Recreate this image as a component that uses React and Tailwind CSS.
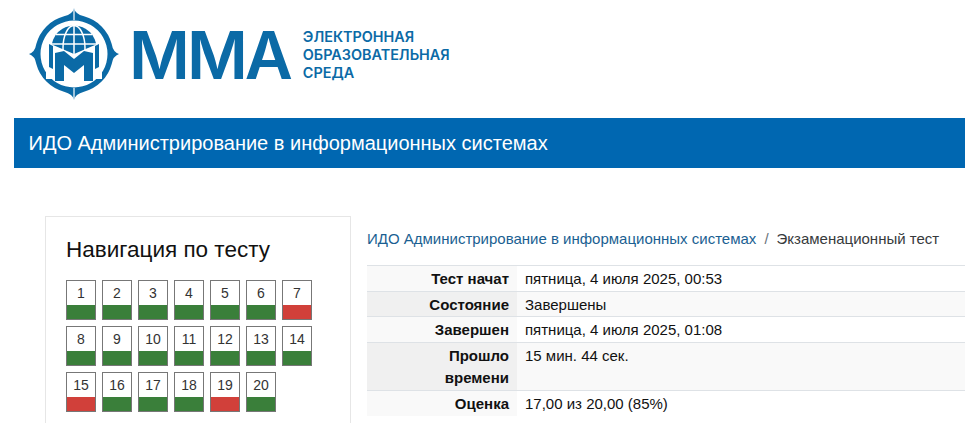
const BLUE = "#0b6aa6";

const Logo = () => (
  <svg width="92" height="94" viewBox="0 0 92 94" className="shrink-0">
    {/* ring with four flared points */}
    <path
      fill={BLUE}
      fillRule="evenodd"
      d="M46 1 Q47 7 56 9.3 A39 39 0 0 1 83.7 37 Q85 45 91 47 Q85 49 83.7 57 A39 39 0 0 1 56 84.7 Q47 87 46 93 Q45 87 36 84.7 A39 39 0 0 1 8.3 57 Q7 49 1 47 Q7 45 8.3 37 A39 39 0 0 1 36 9.3 Q45 7 46 1 Z M46 13.5 A33.5 33.5 0 1 0 46.01 13.5 Z"
    />
    <path d="M46 0 V13 M46 81 V94" stroke="#fff" strokeWidth="1.2" />
    {/* globe */}
    <circle cx="46" cy="41" r="22.5" fill={BLUE} />
    <g stroke="#fff" strokeWidth="1.5" fill="none">
      <ellipse cx="46" cy="41" rx="11" ry="22.5" />
      <path d="M46 18 V50 M28 27.5 H64 M23 37 H69" />
    </g>
    {/* open book */}
    <path d="M18 35 L46 47 L74 35 V72 H18 Z" fill="#fff" />
    <path d="M21 37 L25 39 V62 L21 60 Z M71 37 L67 39 V62 L71 60 Z" fill={BLUE} />
    <path
      fill={BLUE}
      d="M27 46 L36 44 L46 52 L56 44 L65 46 V74 H56 V58 L46 66 L36 58 V74 H27 Z"
    />
  </svg>
);

const NAV_ITEMS = [
  1, 2, 3, 4, 5, 6, 7, 8, 9, 10, 11, 12, 13, 14, 15, 16, 17, 18, 19, 20,
];
const WRONG = [7, 15, 19];

const ROWS = [
  { label: "Тест начат", value: "пятница, 4 июля 2025, 00:53", head: "bg-[#f9f9f9]", cell: "bg-white", h: "h-[26px]" },
  { label: "Состояние", value: "Завершены", head: "bg-[#f0f0f0]", cell: "bg-[#f9f9f9]", h: "h-[25px]" },
  { label: "Завершен", value: "пятница, 4 июля 2025, 01:08", head: "bg-[#f9f9f9]", cell: "bg-white", h: "h-[26px]" },
  { label: "Прошло времени", value: "15 мин. 44 сек.", head: "bg-[#f0f0f0]", cell: "bg-[#f9f9f9]", h: "h-[48px]" },
  { label: "Оценка", value: "17,00 из 20,00 (85%)", head: "bg-[#f9f9f9]", cell: "bg-white", h: "h-[25px]" },
];

export default function App() {
  return (
    <div className="h-[423px] overflow-hidden bg-white font-['Liberation_Sans',sans-serif] text-[#1d2125]">
      <header className="flex h-[118px] items-start pl-[28px] pt-[7px]">
        <Logo />
        <div className="ml-[9px] mt-[13px] font-['Inter',sans-serif] text-[66px] font-semibold leading-[70px] tracking-[-3px] text-[#0b6aa6]">
          MMA
        </div>
        <div className="ml-[13px] mt-[21px] font-['Inter',sans-serif] text-[14.4px] font-semibold leading-[18px] text-[#0b6aa6]">
          <div>ЭЛЕКТРОННАЯ</div>
          <div>ОБРАЗОВАТЕЛЬНАЯ</div>
          <div>СРЕДА</div>
        </div>
      </header>

      <div className="ml-[14px] flex h-[50px] items-center bg-[#0067b1] pl-[14.5px] text-[20px] text-white">
        ИДО Администрирование в информационных системах
      </div>

      <main className="mt-[48px] flex items-start pl-[45px]">
        <aside className="h-[300px] w-[306px] shrink-0 border border-[#e6e6e6] px-[20px] pt-[19px]">
          <h2 className="text-[22.5px] leading-[28px] text-[#111]">Навигация по тесту</h2>
          <div className="mt-[16px] grid w-[246px] grid-cols-[repeat(7,30px)] gap-x-[6px] gap-y-[6px]">
            {NAV_ITEMS.map((n) => (
              <div key={n} className="flex h-[40px] flex-col border border-[#777]">
                <div className="flex flex-1 items-center justify-center bg-white pt-[1px] text-[14px] text-[#333]">{n}</div>
                <div className={WRONG.includes(n) ? "h-[14px] bg-[#d1403a]" : "h-[14px] bg-[#3a7f3a]"} />
              </div>
            ))}
          </div>
        </aside>

        <section className="ml-[16px] min-w-0 flex-1">
          <div className="flex h-[49px] items-start pt-[14px] text-[15px] leading-[18px]">
            <span className="text-[#1b5f92]">ИДО Администрирование в информационных системах</span>
            <span className="mx-[8px] text-[#6a737b]">/</span>
            <span className="text-[#373a3c]">Экзаменационный тест</span>
          </div>
          <div className="border-t border-[#dee2e6] text-[15px] leading-[22px]">
            {ROWS.map((r) => (
              <div key={r.label} className={`flex border-b border-[#dee2e6] last:border-b-0 ${r.h}`}>
                <div className={`w-[150px] shrink-0 pl-[25px] pr-[8px] pt-[2px] text-right font-bold text-[#111] ${r.head}`}>{r.label}</div>
                <div className={`flex-1 pl-[8px] pt-[2px] text-[#111] ${r.cell}`}>{r.value}</div>
              </div>
            ))}
          </div>
        </section>
      </main>
    </div>
  );
}
